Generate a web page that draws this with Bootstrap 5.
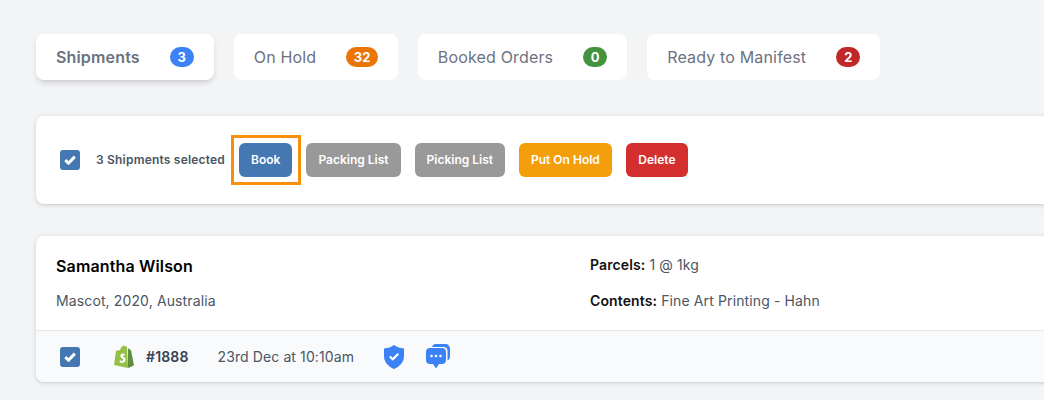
<!DOCTYPE html>
<html lang="en">
<head>
    <meta charset="UTF-8">
    <meta name="viewport" content="width=device-width, initial-scale=1.0">
    <title>Shipments</title>
    <link href="https://cdn.jsdelivr.net/npm/bootstrap@5.3.0/dist/css/bootstrap.min.css" rel="stylesheet">
    <style>
        html, body{
            overflow: hidden;
        }
        body{
            background: #f3f4f6;
            font-family: Inter, "Liberation Sans", sans-serif;
            color: #4b5563;
            height: 400px;
        }
        .page-wrap{
            width: 1240px;
            padding: 34px 0 0 36px;
        }
        .tab-row{
            gap: 20px;
            margin-bottom: 36px;
        }
        .tab-item{
            height: 46px;
            padding: 0 20px;
            background: #fff;
            border-radius: 8px;
            font-size: 16px;
            letter-spacing: .16px;
            color: #6b7280;
            gap: 30px;
        }
        .tab-item.active-tab{
            font-weight: 600;
            box-shadow: 0 4px 6px -1px rgba(0,0,0,.12), 0 2px 4px -2px rgba(0,0,0,.1);
        }
        .tab-count{
            min-width: 24px;
            height: 20px;
            padding: 0 7.5px;
            border-radius: 10px;
            font-size: 13px;
            font-weight: 700;
            letter-spacing: 0;
            color: #fff;
            line-height: 20px;
            text-align: center;
        }
        .count-blue{ background: #3b82f6; }
        .count-orange{ background: #e97602; }
        .count-green{ background: #43923f; }
        .count-red{ background: #c02727; }
        .panel-box{
            background: #fff;
            border-radius: 8px;
            box-shadow: 0 1px 5px rgba(0,0,0,.13), 0 1px 2px rgba(0,0,0,.06);
        }
        .action-bar{
            height: 88px;
            padding: 0 24px;
            margin-bottom: 32px;
        }
        .tick-box{
            width: 20px;
            height: 20px;
            border-radius: 3px;
            background: #4578b2;
            flex-shrink: 0;
        }
        .select-text{
            font-size: 12px;
            font-weight: 600;
            letter-spacing: .2px;
            margin: 0 14px 0 16px;
            white-space: nowrap;
        }
        .action-btn{
            height: 34px;
            padding: 0 12px;
            border: 0;
            border-radius: 6px;
            font-size: 12px;
            font-weight: 600;
            color: #fff;
            margin-right: 14px;
        }
        .action-btn:hover{ color: #fff; }
        .btn-book{ background: #4578b2; position: relative; }
        .btn-book::after{
            content: "";
            position: absolute;
            top: -8px;
            bottom: -8px;
            left: -8px;
            right: -9px;
            border: 3px solid #f78f08;
        }
        .btn-grey{ background: #999; }
        .btn-hold{ background: #f59e0b; }
        .btn-del{ background: #d32f2f; padding: 0 12.5px; }
        .ship-top{
            height: 95px;
            padding: 12px 20px 0;
            border-bottom: 1px solid #e5e7eb;
        }
        .ship-left{ width: 534px; }
        .ship-right{ margin-top: -1px; }
        .cust-name{
            font-size: 16px;
            font-weight: 600;
            letter-spacing: .15px;
            color: #000;
            line-height: 36px;
            margin-bottom: -1px;
        }
        .ship-line{
            font-size: 14px;
            line-height: 36px;
            letter-spacing: .12px;
        }
        .ship-line strong{
            font-weight: 600;
            color: #111;
        }
        .ship-bottom{
            height: 51px;
            padding: 0 24px;
            background: #f9fafb;
            border-radius: 0 0 8px 8px;
        }
        .shop-logo{ margin-left: 10px; }
        .order-no{
            font-size: 14px;
            font-weight: 600;
            letter-spacing: .15px;
            color: #374151;
            margin: 0 29px 0 12px;
        }
        .order-date{
            font-size: 14px;
            letter-spacing: .1px;
            margin-right: 30px;
        }
        .shield-icon{ margin-right: 22px; }
    </style>
</head>
<body>
    <div class="page-wrap">
        <div class="d-flex tab-row">
            <div class="tab-item active-tab d-flex align-items-center">Shipments <span class="tab-count count-blue">3</span></div>
            <div class="tab-item d-flex align-items-center">On Hold <span class="tab-count count-orange">32</span></div>
            <div class="tab-item d-flex align-items-center">Booked Orders <span class="tab-count count-green">0</span></div>
            <div class="tab-item d-flex align-items-center">Ready to Manifest <span class="tab-count count-red">2</span></div>
        </div>

        <div class="panel-box action-bar d-flex align-items-center">
            <span class="tick-box d-flex align-items-center justify-content-center">
                <svg width="12" height="10" viewBox="0 0 12 10"><path d="M1.300 5.200 4.500 8.200 10.800 1.600" fill="none" stroke="#fff" stroke-width="3"/></svg>
            </span>
            <span class="select-text">3 Shipments selected</span>
            <button class="btn action-btn btn-book">Book</button>
            <button class="btn action-btn btn-grey">Packing List</button>
            <button class="btn action-btn btn-grey">Picking List</button>
            <button class="btn action-btn btn-hold">Put On Hold</button>
            <button class="btn action-btn btn-del">Delete</button>
        </div>

        <div class="panel-box">
            <div class="ship-top d-flex">
                <div class="ship-left">
                    <div class="cust-name">Samantha Wilson</div>
                    <div class="ship-line">Mascot, 2020, Australia</div>
                </div>
                <div class="ship-right">
                    <div class="ship-line"><strong>Parcels:</strong> 1 @ 1kg</div>
                    <div class="ship-line"><strong>Contents:</strong> Fine Art Printing - Hahn</div>
                </div>
            </div>
            <div class="ship-bottom d-flex align-items-center">
                <span class="tick-box d-flex align-items-center justify-content-center me-4">
                    <svg width="12" height="10" viewBox="0 0 12 10"><path d="M1.300 5.200 4.500 8.200 10.800 1.600" fill="none" stroke="#fff" stroke-width="3"/></svg>
                </span>
                <svg class="shop-logo" width="20" height="23" viewBox="0 0 20 23">
                    <path d="M13 2 11 1C9 0 7 2 6 5L2 6 0 20 14 23Z" fill="#95bf47"/>
                    <path d="M14 3 15.500 4.500 17 5 20 20.500 14 23Z" fill="#5e8e3e"/>
                    <path d="M10.500 8.800C9 8.300 6.500 8.800 6.300 11 6.200 13.300 9.500 13.300 9.300 15 9.100 16.200 7.500 16 6 15.200L5.500 17.300C7.500 18.300 11.300 18.200 11.700 14.800 11.900 12.300 8.800 12.300 8.900 11 9 10.300 10 10.400 10.900 10.800Z" fill="#fff"/>
                </svg>
                <span class="order-no">#1888</span>
                <span class="order-date">23rd Dec at 10:10am</span>
                <svg width="20" height="24" viewBox="0 0 20 24" class="shield-icon">
                    <path d="M10 0C7.500 2 4 3.200 0 3.500V11C0 17 4 21.500 10 24 16 21.500 20 17 20 11V3.500C16 3.200 12.500 2 10 0Z" fill="#3b82f6"/>
                    <path d="M5.800 11.500 8.800 14.300 14.300 8.800" fill="none" stroke="#fff" stroke-width="2"/>
                </svg>
                <svg width="24" height="25" viewBox="0 0 24 25">
                    <path d="M6 3C6.500 1 8 0 10 0H19C22 0 24 2 24 5V12C24 14.500 23 16 21.500 16.500V7C21.500 4.500 20 3 17.500 3Z" fill="#3b82f6"/>
                    <path d="M4 4H16C18.500 4 20 5.500 20 8V16C20 18.500 18.500 20 16 20H13L10 24.500 7 20H4C1.500 20 0 18.500 0 16V8C0 5.500 1.500 4 4 4Z" fill="#3b82f6"/>
                    <circle cx="5.500" cy="12" r="1.300" fill="#fff"/><circle cx="10" cy="12" r="1.300" fill="#fff"/><circle cx="14.500" cy="12" r="1.300" fill="#fff"/>
                </svg>
            </div>
        </div>
    </div>
    <script src="https://cdn.jsdelivr.net/npm/bootstrap@5.3.0/dist/js/bootstrap.bundle.min.js"></script>
</body>
</html>
